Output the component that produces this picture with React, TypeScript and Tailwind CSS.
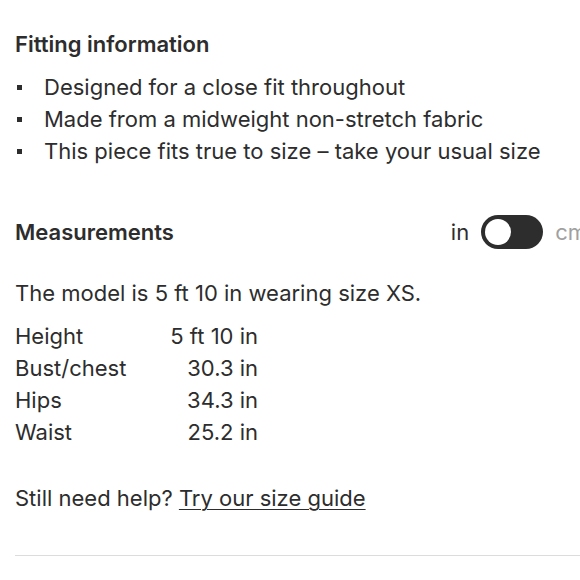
export default function App() {
  const bullets = [
    "Designed for a close fit throughout",
    "Made from a midweight non-stretch fabric",
    "This piece fits true to size – take your usual size",
  ];
  const rows = [
    ["Height", "5 ft 10 in"],
    ["Bust/chest", "30.3 in"],
    ["Hips", "34.3 in"],
    ["Waist", "25.2 in"],
  ];

  return (
    <div className="w-[580px] h-[580px] overflow-hidden bg-white text-[#2d2d2d] font-['Inter',sans-serif]">
      <div className="w-[620px] pl-[15px] pt-[29px]">
        {/* Fitting information */}
        <h2 className="text-[22px] font-semibold leading-[30px]">Fitting information</h2>
        <ul className="mt-[12px] flex flex-col">
          {bullets.map((b) => (
            <li key={b} className="flex items-center h-[32px] text-[22px]">
              <span className="w-[5px] h-[5px] bg-[#2d2d2d] ml-[2px] mr-[22px]" />
              <span>{b}</span>
            </li>
          ))}
        </ul>

        {/* Measurements */}
        <div className="mt-[47px] flex items-center justify-between w-[572px] h-[36px]">
          <h2 className="text-[22px] font-semibold">Measurements</h2>
          <div className="flex items-center gap-[12px] text-[22px]">
            <span>in</span>
            <div className="w-[62px] h-[34px] rounded-full bg-[#2d2d2d] p-[4px] flex items-center">
              <div className="w-[26px] h-[26px] rounded-full bg-white" />
            </div>
            <span className="text-[#a0a0a0]">cm</span>
          </div>
        </div>

        <p className="mt-[27px] text-[22px] leading-[32px]">The model is 5 ft 10 in wearing size XS.</p>

        <div className="mt-[11px] flex flex-col text-[22px]">
          {rows.map(([k, v]) => (
            <div key={k} className="flex h-[32px] items-center">
              <span className="w-[135px]">{k}</span>
              <span className="w-[108px] text-right">{v}</span>
            </div>
          ))}
        </div>

        <p className="mt-[34px] text-[22px] leading-[32px]">
          Still need help? <a className="underline underline-offset-[3px] decoration-1">Try our size guide</a>
        </p>

        <div className="mt-[41px] h-px bg-[#dcdcdc]" />
      </div>
    </div>
  );
}
